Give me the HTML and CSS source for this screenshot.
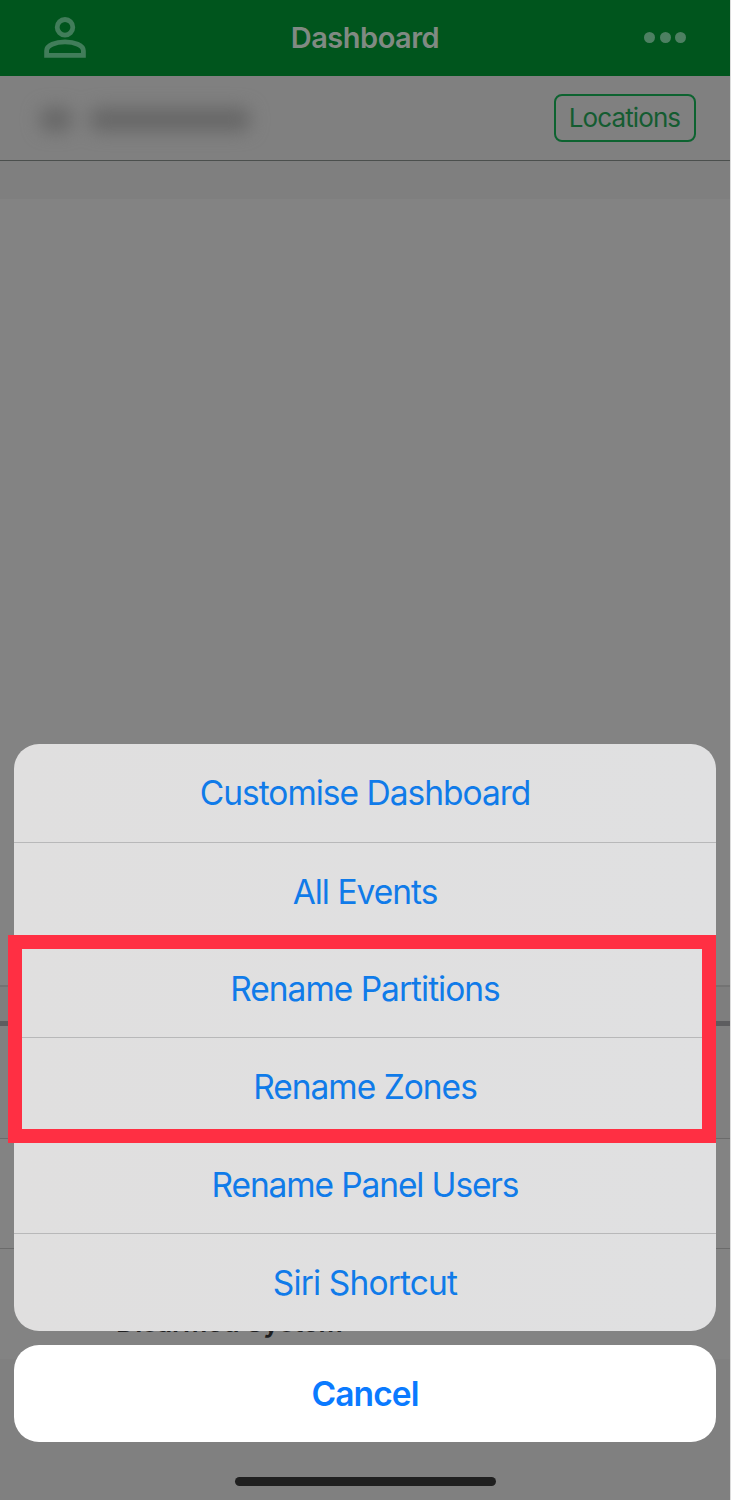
FILE: index.html
```
<!DOCTYPE html>
<html lang="en">
<head>
<meta charset="utf-8">
<title>Dashboard</title>
<link rel="stylesheet" href="styles.css">
</head>
<body>
<div class="screen">
  <header class="navbar">
    <svg class="profile" viewBox="0 0 42 42" width="42" height="42" fill="none" stroke="#417d5a" stroke-width="4.8">
      <circle cx="21" cy="10.3" r="7.8"/>
      <path d="M2.6 38.4v-4.6c0-5.7 9-8.9 18.4-8.9s18.400 3.200 18.400 8.900v4.600z"/>
    </svg>
    <h1 class="title">Dashboard</h1>
    <div class="more"><i></i><i></i><i></i></div>
  </header>
  <section class="location">
    <div class="site-name"><span class="smudge short"></span><span class="smudge long"></span></div>
    <button class="locations"><span>Locations</span></button>
  </section>
  <div class="band"></div>
  <main class="content"></main>
  <div class="strip"></div>
  <div class="row first"></div>
  <div class="row second"></div>
  <div class="row third"><span class="event">Disarmed System</span></div>
  <footer class="footer"><div class="home"></div></footer>

  <div class="sheet">
    <nav class="actions">
      <button class="action"><span>Customise Dashboard</span></button>
      <button class="action"><span>All Events</span></button>
      <button class="action"><span>Rename Partitions</span></button>
      <button class="action"><span>Rename Zones</span></button>
      <button class="action tight"><span>Rename Panel Users</span></button>
      <button class="action loose"><span>Siri Shortcut</span></button>
    </nav>
    <button class="cancel"><span>Cancel</span></button>
  </div>
  <div class="highlight"></div>
</div>
</body>
</html>
```
FILE: styles.css
```
* { box-sizing: border-box; }
body { margin: 0; background: #dcdcdc; font-family: Inter, "Liberation Sans", sans-serif; }
button { appearance: none; border: 0; margin: 0; padding: 0; background: none; font: inherit; }

.screen { position: relative; width: 730px; height: 1500px; background: #838383; overflow: hidden; display: flex; flex-direction: column; }
.screen > * { flex-shrink: 0; }

.navbar { height: 75.500px; background: #00551d; display: grid; grid-template-columns: 1fr auto 1fr; align-items: center; padding: 0 44px; }
.profile { display: block; }
.title { margin: 0; font-size: 29px; font-weight: 560; line-height: 36px; color: #808a83; letter-spacing: -0.5px; }
.more { display: flex; gap: 4.500px; justify-content: flex-end; }
.more i { width: 11px; height: 11px; border-radius: 50%; background: #4d8062; }

.location { height: 85px; background: #808080; border-bottom: 1.500px solid #4b4f4d; display: flex; align-items: center; justify-content: space-between; padding: 0 34px 0 40px; }
.site-name { display: flex; gap: 18px; padding-top: 4px; filter: blur(9px); }
.smudge { height: 23px; background: #666; border-radius: 8px; }
.short { width: 32px; }
.long { width: 160px; }
.locations { width: 142px; height: 48px; border: 2px solid #0d6330; border-radius: 8px; color: #145c31; font-size: 26px; line-height: 44px; letter-spacing: -0.9px; padding: 0 1px 0 0; }
.band { height: 38px; background: #7f7f7f; }
.content { height: 788px; border-bottom: 2px solid #737373; }
.strip { height: 39px; background: #7e7e7e; border-bottom: 5px solid #5d5d5f; }
.row { border-bottom: 1px solid #6b6b6b; }
.first { height: 113px; background: #808080; }
.second { height: 110px; }
.third { height: 110px; border: 0; padding: 57.500px 0 0 116px; }
.event { display: block; font-size: 27px; line-height: 34px; font-weight: 600; letter-spacing: -0.2px; color: #1e1e20; }
.footer { flex: 1; background: #808080; padding-top: 118.500px; }
.home { width: 261px; height: 9px; margin: 0 auto; border-radius: 5px; background: #202020; }

.sheet { position: absolute; left: 14px; right: 14px; top: 744px; display: flex; flex-direction: column; gap: 14px; }
.actions { height: 586.500px; border-radius: 25px; background: linear-gradient(90deg, #e0dfdf, #e0e0e1); overflow: hidden; display: grid; grid-template-rows: repeat(6, 1fr); }
.action { color: #107be9; font-size: 33.500px; line-height: 42px; text-align: center; letter-spacing: -1px; padding-top: 1px; }
.tight { letter-spacing: -1.120px; }
.loose { letter-spacing: -0.850px; }
.action + .action { border-top: 1px solid #b8b8b9; }
.cancel { height: 97px; border-radius: 25px; background: #fff; color: #0a7aff; font-size: 33.500px; font-weight: 600; line-height: 42px; letter-spacing: -0.900px; padding-top: 1px; }
.highlight { position: absolute; left: 8px; top: 935px; width: 708px; height: 208px; border: 14px solid #ff2f43; }
```
